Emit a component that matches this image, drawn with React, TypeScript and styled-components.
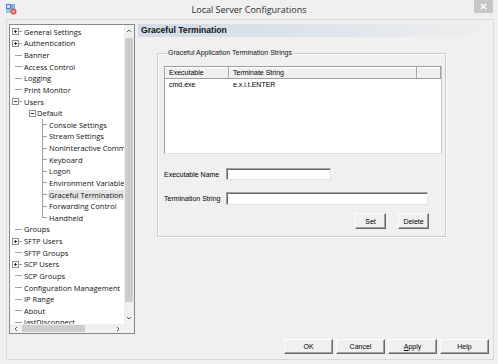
import React from 'react';
import styled, { createGlobalStyle } from 'styled-components';

const GlobalStyle = createGlobalStyle`
  html, body {
    margin: 0;
    padding: 0;
    background: #f0f0f0;
  }
  * {
    box-sizing: border-box;
  }
`;

const Window = styled.div`
  width: 498px;
  height: 364px;
  background: #f0f0f0;
  display: flex;
  flex-direction: column;
  overflow: hidden;
  font-family: "Liberation Sans", Arial, sans-serif;
  color: #000;
`;

const TitleBar = styled.div`
  height: 19px;
  flex: none;
  display: grid;
  grid-template-columns: 1fr auto 1fr;
  align-items: start;
`;

const AppIcon = styled.svg`
  margin: 4px 0 0 6px;
`;

const Title = styled.div`
  font-family: "Open Sans", sans-serif;
  font-size: 9px;
  line-height: 19px;
  color: #2b2b2b;
`;

const CloseButton = styled.div`
  justify-self: end;
  width: 19px;
  height: 13px;
  margin-right: 5px;
  background: #c7c7c7;
  display: flex;
  align-items: center;
  justify-content: center;
`;

const Frame = styled.div`
  flex: 1;
  margin: 0 4px 4px 6px;
  border: 1px solid #d9d9d9;
  display: flex;
  flex-direction: column;
`;

const Body = styled.div`
  height: 314px;
  flex: none;
  display: flex;
  gap: 3px;
  padding: 4px 3px 0 2px;
`;

/* ---------- tree ---------- */

const Tree = styled.div`
  width: 126px;
  height: 310px;
  flex: none;
  border: 1px solid #828790;
  background: #fff;
  display: grid;
  grid-template-columns: 1fr 10px;
  grid-template-rows: 1fr 9px;
`;

const TreeContent = styled.div`
  overflow: hidden;
  padding-top: 1px;
  font-family: "Open Sans", sans-serif;
  font-size: 7.5px;
  color: #111;
`;

const TreeRow = styled.div<{ $indent: number }>`
  display: flex;
  align-items: stretch;
  height: 11.64px;
  padding-left: ${p => p.$indent}px;
  white-space: nowrap;
`;

const Gutter = styled.div<{ $width: number; $line?: 'full' | 'half' }>`
  width: ${p => p.$width}px;
  flex: none;
  display: flex;
  align-items: center;
  background: ${p =>
    p.$line === 'full'
      ? 'linear-gradient(#a0a0a0, #a0a0a0) left top / 1px 100% no-repeat'
      : p.$line === 'half'
      ? 'linear-gradient(#a0a0a0, #a0a0a0) left top / 1px 50% no-repeat'
      : 'none'};
`;

const Stub = styled.span<{ $offset: number; $length: number }>`
  display: block;
  margin-left: ${p => p.$offset}px;
  width: ${p => p.$length}px;
  height: 1px;
  background: #a0a0a0;
`;

const Expander = styled.svg`
  display: block;
  flex: none;
`;

const TreeLabel = styled.span<{ $selected?: boolean }>`
  display: flex;
  align-items: center;
  padding: 0 1px;
  margin-left: -1px;
  line-height: 10px;
  height: 10px;
  align-self: center;
  background: ${p => (p.$selected ? '#e5e5e5' : 'transparent')};
`;

const VScroll = styled.div`
  background: #f0f0f0;
  display: flex;
  flex-direction: column;
`;

const HScroll = styled.div`
  background: #f0f0f0;
  display: flex;
`;

const Corner = styled.div`
  background: #f0f0f0;
`;

const ArrowBox = styled.div<{ $vertical?: boolean }>`
  flex: none;
  width: ${p => (p.$vertical ? '100%' : '12px')};
  height: ${p => (p.$vertical ? '12px' : '100%')};
  display: flex;
  align-items: center;
  justify-content: center;
`;

const Track = styled.div<{ $vertical?: boolean }>`
  flex: 1;
  display: flex;
  flex-direction: ${p => (p.$vertical ? 'column' : 'row')};
  padding: ${p => (p.$vertical ? '1px 1px' : '1px 0')};
`;

const Thumb = styled.div<{ $size: number; $vertical?: boolean }>`
  background: #cdcdcd;
  width: ${p => (p.$vertical ? '100%' : `${p.$size}px`)};
  height: ${p => (p.$vertical ? `${p.$size}px` : '100%')};
`;

/* ---------- right pane ---------- */

const RightPane = styled.div`
  flex: 1;
  display: flex;
  flex-direction: column;
`;

const PaneHeader = styled.div`
  height: 13px;
  padding-left: 3px;
  background: linear-gradient(to right, #d1dae6 0%, #e0e5ec 55%, #efefef 100%);
  font-weight: bold;
  font-size: 8.6px;
  line-height: 13px;
  color: #111;
`;

const GroupBox = styled.fieldset`
  margin: 12px 44px 0 19px;
  padding: 9px 3px 7px 6px;
  min-width: 0;
  border: 1px solid #cbcbcb;
  box-shadow: inset 1px 1px 0 #fff, 1px 1px 0 #fff;
`;

const Legend = styled.legend`
  margin-left: 3px;
  padding: 0 1px;
  font-size: 7px;
  line-height: 8px;
  color: #111;
`;

const ListView = styled.div`
  width: 278px;
  height: 88px;
  background: #fff;
  border: 1px solid #a0a0a0;
  border-right-color: #c8c8c8;
  border-bottom-color: #e0e0e0;
  font-size: 7px;
`;

const ListHeader = styled.div`
  display: grid;
  grid-template-columns: 64px 188px 1fr;
  height: 12px;
  background: #f0f0f0;
  border-bottom: 1px solid #a0a0a0;
  box-shadow: inset 0 1px 0 #fff;
`;

const HeaderCell = styled.div`
  padding-left: 4px;
  line-height: 11px;
  border-right: 1px solid #a0a0a0;
  box-shadow: inset 1px 0 0 #fff;
`;

const ListRow = styled.div`
  display: grid;
  grid-template-columns: 64px 188px 1fr;
  height: 11px;
  line-height: 11px;
`;

const ListCell = styled.div`
  padding-left: 4px;
`;

const FormGrid = styled.div`
  display: grid;
  grid-template-columns: 62px auto;
  justify-items: start;
  align-items: center;
  row-gap: 12px;
  margin-top: 14px;
  margin-right: 14px;
  font-size: 7px;
`;

const Label = styled.label`
  white-space: nowrap;
`;

const TextInput = styled.input<{ $width: number; $height: number }>`
  width: ${p => p.$width}px;
  height: ${p => p.$height}px;
  margin: 0;
  padding: 0 2px;
  background: #fff;
  border: 1px solid;
  border-color: #a0a0a0 #e3e3e3 #e3e3e3 #a0a0a0;
  box-shadow: inset 1px 1px 0 #696969;
  outline: none;
  font-size: 7px;
`;

const ButtonRow = styled.div<{ $gap: number }>`
  display: flex;
  justify-content: flex-end;
  gap: ${p => p.$gap}px;
`;

const GroupButtons = styled(ButtonRow)`
  margin-top: 8px;
  padding-right: 13px;
`;

const Footer = styled(ButtonRow)`
  padding: 5px 4px 5px 0;
`;

const Button = styled.button<{ $width: number; $height: number }>`
  width: ${p => p.$width}px;
  height: ${p => p.$height}px;
  margin: 0;
  padding: 0;
  background: #f0f0f0;
  border: 1px solid;
  border-color: #fdfdfd #696969 #696969 #fdfdfd;
  box-shadow: inset -1px -1px 0 #a0a0a0;
  font-family: "Liberation Sans", Arial, sans-serif;
  font-size: 7px;
  color: #000;
  line-height: 1;
`;

/* ---------- data ---------- */

type Node = {
  label: string;
  level: 0 | 1 | 2;
  toggle?: '+' | '-';
  selected?: boolean;
  last?: boolean;
};

const nodes: Node[] = [
  { label: 'General Settings', level: 0, toggle: '+' },
  { label: 'Authentication', level: 0, toggle: '+' },
  { label: 'Banner', level: 0 },
  { label: 'Access Control', level: 0 },
  { label: 'Logging', level: 0 },
  { label: 'Print Monitor', level: 0 },
  { label: 'Users', level: 0, toggle: '-' },
  { label: 'Default', level: 1, toggle: '-' },
  { label: 'Console Settings', level: 2 },
  { label: 'Stream Settings', level: 2 },
  { label: 'NonInteractive Commands', level: 2 },
  { label: 'Keyboard', level: 2 },
  { label: 'Logon', level: 2 },
  { label: 'Environment Variables', level: 2 },
  { label: 'Graceful Termination', level: 2, selected: true },
  { label: 'Forwarding Control', level: 2 },
  { label: 'Handheld', level: 2, last: true },
  { label: 'Groups', level: 0 },
  { label: 'SFTP Users', level: 0, toggle: '+' },
  { label: 'SFTP Groups', level: 0 },
  { label: 'SCP Users', level: 0, toggle: '+' },
  { label: 'SCP Groups', level: 0 },
  { label: 'Configuration Management', level: 0 },
  { label: 'IP Range', level: 0 },
  { label: 'About', level: 0 },
  { label: 'lastDisconnect', level: 0 },
];

const ToggleBox: React.FC<{ sign: '+' | '-' }> = ({ sign }) => (
  <Expander width="7" height="7" viewBox="0 0 7 7">
    <rect x="0.5" y="0.5" width="6" height="6" fill="#fff" stroke="#8e8f8f" />
    <line x1="2" y1="3.5" x2="5" y2="3.5" stroke="#333" />
    {sign === '+' && <line x1="3.5" y1="2" x2="3.5" y2="5" stroke="#333" />}
  </Expander>
);

const Chevron: React.FC<{ dir: 'up' | 'down' | 'left' | 'right' }> = ({ dir }) => {
  const rot = { up: 0, right: 90, down: 180, left: 270 }[dir];
  return (
    <svg width="6" height="6" viewBox="0 0 6 6">
      <polyline
        points="1,4 3,2 5,4"
        fill="none"
        stroke="#606060"
        strokeWidth="1"
        transform={`rotate(${rot} 3 3)`}
      />
    </svg>
  );
};

const TreeNode: React.FC<{ node: Node }> = ({ node }) => {
  if (node.level === 0) {
    return (
      <TreeRow $indent={2}>
        <Gutter $width={12}>
          {node.toggle ? (
            <>
              <ToggleBox sign={node.toggle} />
              <Stub $offset={0} $length={3} />
            </>
          ) : (
            <Stub $offset={3} $length={7} />
          )}
        </Gutter>
        <TreeLabel $selected={node.selected}>{node.label}</TreeLabel>
      </TreeRow>
    );
  }
  if (node.level === 1) {
    return (
      <TreeRow $indent={19}>
        <Gutter $width={8}>{node.toggle && <ToggleBox sign={node.toggle} />}</Gutter>
        <TreeLabel $selected={node.selected}>{node.label}</TreeLabel>
      </TreeRow>
    );
  }
  return (
    <TreeRow $indent={32}>
      <Gutter $width={7} $line={node.last ? 'half' : 'full'}>
        <Stub $offset={0} $length={5} />
      </Gutter>
      <TreeLabel $selected={node.selected}>{node.label}</TreeLabel>
    </TreeRow>
  );
};

const App: React.FC = () => {
  return (
    <Window>
      <GlobalStyle />
      <TitleBar>
        <AppIcon width="11" height="11" viewBox="0 0 11 11">
          <rect x="0" y="0" width="5" height="5" fill="#3f7fc4" />
          <rect x="5" y="0" width="4" height="5" fill="#7fb2e0" />
          <rect x="0" y="5" width="5" height="4" fill="#9cc4e8" />
          <rect x="1" y="1" width="3" height="3" fill="#cfe3f5" />
          <circle cx="7.5" cy="7.5" r="3" fill="#d9534f" />
          <circle cx="7.5" cy="7.5" r="1.5" fill="#f2a7a4" />
        </AppIcon>
        <Title>Local Server Configurations</Title>
        <CloseButton>
          <svg width="7" height="7" viewBox="0 0 7 7">
            <path d="M1 1 L6 6 M6 1 L1 6" stroke="#fff" strokeWidth="1.6" />
          </svg>
        </CloseButton>
      </TitleBar>

      <Frame>
        <Body>
          <Tree>
            <TreeContent>
              {nodes.map(n => (
                <TreeNode key={n.label} node={n} />
              ))}
            </TreeContent>
            <VScroll>
              <ArrowBox $vertical>
                <Chevron dir="up" />
              </ArrowBox>
              <Track $vertical>
                <Thumb $vertical $size={264} />
              </Track>
              <ArrowBox $vertical>
                <Chevron dir="down" />
              </ArrowBox>
            </VScroll>
            <HScroll>
              <ArrowBox>
                <Chevron dir="left" />
              </ArrowBox>
              <Track>
                <Thumb $size={63} />
              </Track>
              <ArrowBox>
                <Chevron dir="right" />
              </ArrowBox>
            </HScroll>
            <Corner />
          </Tree>

          <RightPane>
            <PaneHeader>Graceful Termination</PaneHeader>
            <GroupBox>
              <Legend>Graceful Application Termination Strings</Legend>
              <ListView>
                <ListHeader>
                  <HeaderCell>Executable</HeaderCell>
                  <HeaderCell>Terminate String</HeaderCell>
                  <HeaderCell />
                </ListHeader>
                <ListRow>
                  <ListCell>cmd.exe</ListCell>
                  <ListCell>e.x.i.t.ENTER</ListCell>
                </ListRow>
              </ListView>

              <FormGrid>
                <Label htmlFor="exe-name">Executable Name</Label>
                <TextInput id="exe-name" $width={105} $height={12} />
                <Label htmlFor="term-string">Termination String</Label>
                <TextInput id="term-string" $width={202} $height={13} />
              </FormGrid>

              <GroupButtons $gap={12}>
                <Button $width={31} $height={16}>Set</Button>
                <Button $width={31} $height={16}>Delete</Button>
              </GroupButtons>
            </GroupBox>
          </RightPane>
        </Body>

        <Footer $gap={3}>
          <Button $width={49} $height={15}>OK</Button>
          <Button $width={49} $height={15}>Cancel</Button>
          <Button $width={49} $height={15}>
            <u>A</u>pply
          </Button>
          <Button $width={49} $height={15}>Help</Button>
        </Footer>
      </Frame>
    </Window>
  );
};

export default App;
